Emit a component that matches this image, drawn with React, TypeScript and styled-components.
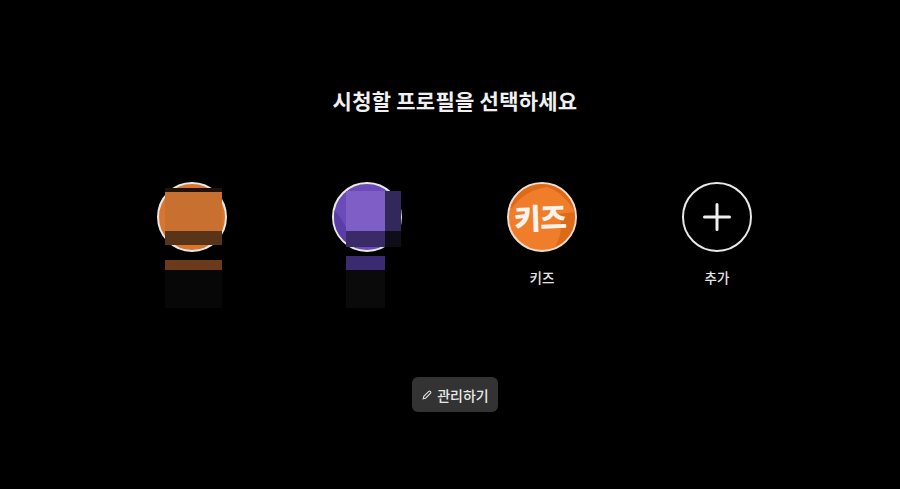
import * as React from 'react'
import styled, { createGlobalStyle } from 'styled-components'

const GlobalStyle = createGlobalStyle`
  html, body {
    margin: 0;
    height: 100%;
    background: #000;
  }
  body {
    font-family: "Noto Sans CJK KR", "Noto Sans", sans-serif;
    color: #fff;
  }
`

const Page = styled.div`
  height: 489px;
  padding: 85px 0 0 9px;
  box-sizing: border-box;
  display: flex;
  flex-direction: column;
  align-items: center;
  overflow: hidden;
`

const Title = styled.h1`
  margin: 0 0 0 1px;
  font-size: 21px;
  line-height: 30px;
  font-weight: 700;
  letter-spacing: 0.25px;
  color: #f0f0f0;
`

const ProfileRow = styled.div`
  display: flex;
  margin-top: 67px;
`

const Profile = styled.div`
  position: relative;
  width: 175px;
  height: 195px;
  display: flex;
  flex-direction: column;
  align-items: center;
`

const Avatar = styled.div<{ $bg: string; $ring?: string }>`
  position: relative;
  width: 70px;
  height: 70px;
  box-sizing: border-box;
  border: 2px solid ${(p) => p.$ring || '#e8e8e8'};
  border-radius: 50%;
  background: ${(p) => p.$bg};
  overflow: hidden;
  display: flex;
  align-items: center;
  justify-content: center;
`

const Swoosh = styled.svg`
  position: absolute;
  inset: 0;
  width: 100%;
  height: 100%;
`

const KidsMark = styled.span`
  position: relative;
  font-size: 29px;
  line-height: 1;
  font-weight: 900;
  letter-spacing: -0.5px;
  color: #fbf3ec;
  transform: rotate(-2deg) translate(-2px, -1px);
`

const Name = styled.div`
  margin-top: 16px;
  font-size: 13.5px;
  line-height: 18px;
  font-weight: 500;
  color: #e4e4e4;
`

const Patch = styled.div<{ $left: number; $top: number; $w: number; $h: number; $bg: string }>`
  position: absolute;
  left: ${(p) => p.$left}px;
  top: ${(p) => p.$top}px;
  width: ${(p) => p.$w}px;
  height: ${(p) => p.$h}px;
  background: ${(p) => p.$bg};
`

const ManageButton = styled.button`
  margin-top: 0;
  width: 86px;
  height: 35px;
  padding: 0 0 0 2px;
  border: 0;
  border-radius: 6px;
  background: #333;
  color: #e8e8e8;
  font-family: inherit;
  font-size: 14px;
  font-weight: 500;
  display: flex;
  align-items: center;
  justify-content: center;
  gap: 5px;
`

const PencilIcon = () => (
  <svg width="10" height="10" viewBox="0 0 10 10" fill="none" stroke="#e0e0e0" strokeWidth="1.1">
    <path d="M1.2 8.8 L1.8 6.4 L6.8 1.4 Q7.5 .8 8.2 1.4 L8.6 1.8 Q9.2 2.5 8.6 3.2 L3.6 8.2 Z" />
  </svg>
)

const PlusIcon = () => (
  <svg width="28" height="28" viewBox="0 0 28 28" fill="none" stroke="#f0f0f0" strokeWidth="3" strokeLinecap="round">
    <path d="M14 1.5V26.5M1.5 14H26.5" />
  </svg>
)

export default function App() {
  return (
    <Page>
      <GlobalStyle />
      <Title>시청할 프로필을 선택하세요</Title>
      <ProfileRow>
        <Profile>
          <Avatar $bg="#d9752c" />
          <Patch $left={60} $top={6} $w={57} $h={4} $bg="#201209" />
          <Patch $left={60} $top={10} $w={57} $h={39} $bg="#c8702f" />
          <Patch $left={60} $top={49} $w={57} $h={14} $bg="#5a3419" />
          <Patch $left={60} $top={78} $w={57} $h={10} $bg="#6a3a1a" />
          <Patch $left={60} $top={88} $w={57} $h={38} $bg="#070707" />
        </Profile>
        <Profile>
          <Avatar $bg="#6a4bb8">
            <Swoosh viewBox="0 0 66 66">
              <path d="M0 26 Q8 34 14 48 L14 66 L0 66 Z" fill="#5a3da6" />
            </Swoosh>
          </Avatar>
          <Patch $left={66} $top={9} $w={39} $h={40} $bg="#7f5fc6" />
          <Patch $left={105} $top={9} $w={16} $h={40} $bg="#33285a" />
          <Patch $left={66} $top={49} $w={39} $h={16} $bg="#3a2b66" />
          <Patch $left={105} $top={49} $w={16} $h={16} $bg="#0f0e18" />
          <Patch $left={66} $top={74} $w={39} $h={14} $bg="#3a2a72" />
          <Patch $left={66} $top={88} $w={39} $h={38} $bg="#0b0a0b" />
        </Profile>
        <Profile>
          <Avatar $bg="#ef7d2a" $ring="#efdccd">
            <Swoosh viewBox="0 0 66 66">
              <path d="M0 0 H66 V66 H44 Q56 48 50 30 L66 28 Q54 8 38 3 Q16 6 3 24 L0 24 Z" fill="#dc6a18" />
            </Swoosh>
            <KidsMark>키즈</KidsMark>
          </Avatar>
          <Name>키즈</Name>
        </Profile>
        <Profile>
          <Avatar $bg="#000">
            <PlusIcon />
          </Avatar>
          <Name>추가</Name>
        </Profile>
      </ProfileRow>
      <ManageButton>
        <PencilIcon />
        관리하기
      </ManageButton>
    </Page>
  )
}
